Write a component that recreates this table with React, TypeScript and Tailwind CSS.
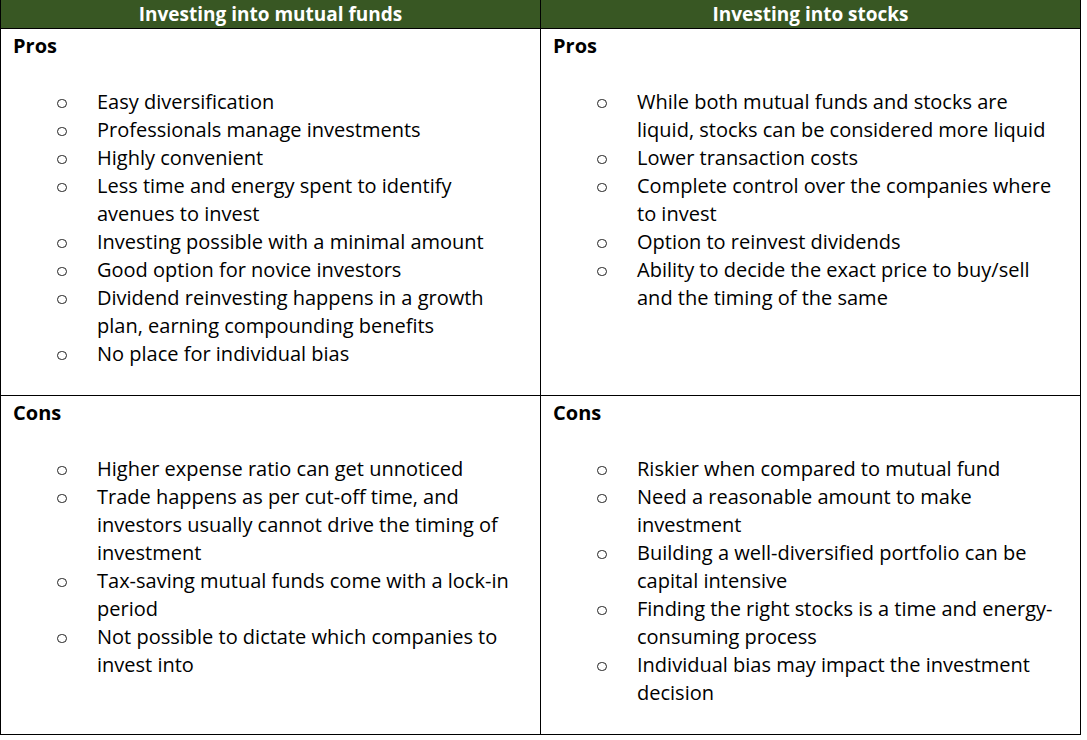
import React from "react";

type Item = string[];

const columns: { title: string; pros: Item[]; cons: Item[] }[] = [
  {
    title: "Investing into mutual funds",
    pros: [
      ["Easy diversification"],
      ["Professionals manage investments"],
      ["Highly convenient"],
      ["Less time and energy spent to identify", "avenues to invest"],
      ["Investing possible with a minimal amount"],
      ["Good option for novice investors"],
      ["Dividend reinvesting happens in a growth", "plan, earning compounding benefits"],
      ["No place for individual bias"],
    ],
    cons: [
      ["Higher expense ratio can get unnoticed"],
      ["Trade happens as per cut-off time, and", "investors usually cannot drive the timing of", "investment"],
      ["Tax-saving mutual funds come with a lock-in", "period"],
      ["Not possible to dictate which companies to", "invest into"],
    ],
  },
  {
    title: "Investing into stocks",
    pros: [
      ["While both mutual funds and stocks are", "liquid, stocks can be considered more liquid"],
      ["Lower transaction costs"],
      ["Complete control over the companies where", "to invest"],
      ["Option to reinvest dividends"],
      ["Ability to decide the exact price to buy/sell", "and the timing of the same"],
    ],
    cons: [
      ["Riskier when compared to mutual fund"],
      ["Need a reasonable amount to make", "investment"],
      ["Building a well-diversified portfolio can be", "capital intensive"],
      ["Finding the right stocks is a time and energy-", "consuming process"],
      ["Individual bias may impact the investment", "decision"],
    ],
  },
];

function Cell({ label, items, className }: { label: string; items: Item[]; className: string }) {
  return (
    <div className={`border-r border-b border-black pl-[12px] pt-[3px] ${className}`}>
      <div className="font-bold leading-[28px]">{label}</div>
      <ul className="mt-[28px]">
        {items.map((lines, i) => (
          <li key={i} className="flex">
            <span className="flex h-[28px] w-[84px] shrink-0 items-center pl-[44px] pt-[3px]">
              <span className="block h-[9px] w-[10px] rounded-full border border-[#222]" />
            </span>
            <div>
              {lines.map((line) => (
                <div key={line} className="whitespace-nowrap leading-[28px]">
                  {line}
                </div>
              ))}
            </div>
          </li>
        ))}
      </ul>
    </div>
  );
}

export default function App() {
  return (
    <div className="min-h-screen bg-white font-['Open_Sans','Liberation_Sans',sans-serif] text-[20px] text-black">
      <div className="grid w-[1081px] grid-cols-[540px_540px] border-l border-black">
        {columns.map((col) => (
          <div
            key={col.title}
            className="flex h-[29px] items-center justify-center border-r border-b border-black bg-[#385723] pt-[1px] text-[19px] font-bold leading-none text-white"
          >
            {col.title}
          </div>
        ))}
        {columns.map((col) => (
          <Cell key={col.title + "pros"} label="Pros" items={col.pros} className="h-[367px]" />
        ))}
        {columns.map((col) => (
          <Cell key={col.title + "cons"} label="Cons" items={col.cons} className="h-[339px]" />
        ))}
      </div>
    </div>
  );
}
